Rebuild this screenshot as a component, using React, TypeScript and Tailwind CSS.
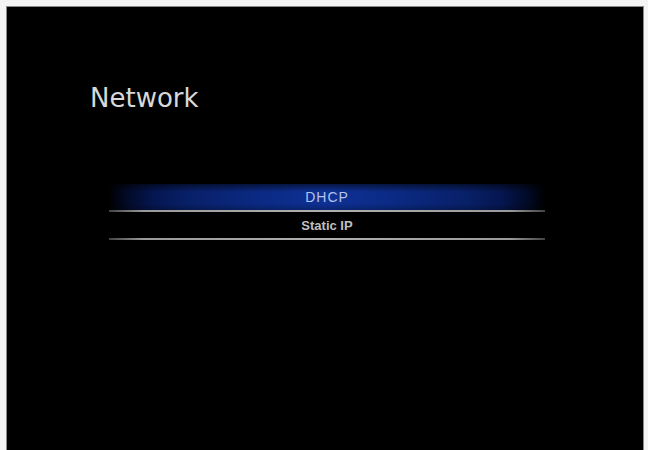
export default function App() {
  return (
    <div className="w-[648px] h-[450px] bg-[#f4f4f4] overflow-hidden">
      <div className="ml-[6px] mt-[6px] w-[638px] h-[444px] bg-[#8a8a8a] pl-px pt-px pr-px">
        <div className="w-full h-full bg-black flex flex-col">
          <div
            className="ml-[83px] mt-[76px] h-[30px] text-[26px] leading-[30px] text-[#d8d8d8]"
            style={{ fontFamily: '"DejaVu Sans", sans-serif' }}
          >
            Network
          </div>
          <div className="ml-[102px] mt-[71px] w-[436px] flex flex-col" style={{ fontFamily: '"Liberation Sans", Arial, sans-serif' }}>
            <div className="h-[26px] flex items-center justify-center bg-[linear-gradient(to_bottom,rgba(0,0,0,0.55)_0%,rgba(0,0,0,0)_30%,rgba(0,0,0,0)_75%,rgba(0,0,0,0.25)_100%),linear-gradient(to_right,rgba(0,0,0,0)_0%,#020a26_4%,#051650_10%,#082068_18%,#0b2a84_35%,#0f3196_50%,#0b2a84_65%,#082068_82%,#051650_90%,#020a26_96%,rgba(0,0,0,0)_100%)]">
              <span className="text-[14px] tracking-[1px] text-[#b4c4ec] leading-none">DHCP</span>
            </div>
            <div className="h-[2px] bg-[linear-gradient(to_right,#444_0%,#9a9a9a_8%,#b0b0b0_50%,#9a9a9a_92%,#444_100%)]" />
            <div className="h-[26px] flex items-center justify-center">
              <span className="text-[13px] font-bold text-[#c0c0c0] leading-none">Static IP</span>
            </div>
            <div className="h-[2px] bg-[linear-gradient(to_right,#444_0%,#9a9a9a_8%,#b0b0b0_50%,#9a9a9a_92%,#444_100%)]" />
          </div>
        </div>
      </div>
    </div>
  );
}
